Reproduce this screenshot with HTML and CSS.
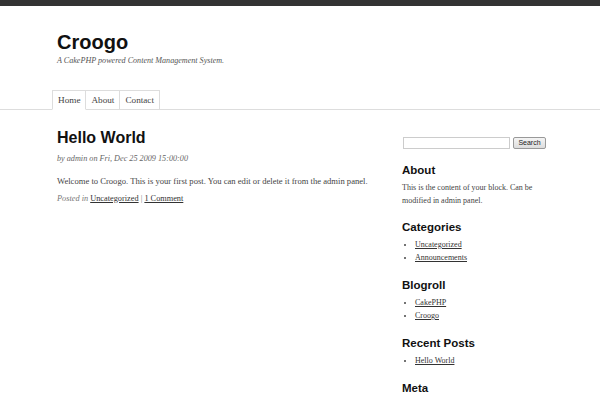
FILE: index.html
```html
<!DOCTYPE html>
<html>
<head>
<meta charset="utf-8">
<link rel="stylesheet" href="styles.css">
</head>
<body>
<div class="topbar"></div>
<header class="header">
  <div class="wrap">
    <h1 class="site-title">Croogo</h1>
    <p class="tagline">A CakePHP powered Content Management System.</p>
    <ul class="nav">
      <li class="active"><a href="#">Home</a></li>
      <li><a href="#">About</a></li>
      <li><a href="#">Contact</a></li>
    </ul>
  </div>
</header>
<div class="wrap main">
  <div class="content">
    <h2 class="post-title">Hello World</h2>
    <p class="meta">by admin on Fri, Dec 25 2009 15:00:00</p>
    <p class="body">Welcome to Croogo. This is your first post. You can edit or delete it from the admin panel.</p>
    <p class="foot"><em>Posted in</em> <a href="#">Uncategorized</a> | <a href="#">1 Comment</a></p>
  </div>
  <aside class="sidebar">
    <form class="search"><input type="text" class="search-input"><button type="button" class="search-btn">Search</button></form>
    <div class="block">
      <h3>About</h3>
      <p>This is the content of your block. Can be modified in admin panel.</p>
    </div>
    <div class="block">
      <h3>Categories</h3>
      <ul><li><a href="#">Uncategorized</a></li><li><a href="#">Announcements</a></li></ul>
    </div>
    <div class="block">
      <h3>Blogroll</h3>
      <ul><li><a href="#">CakePHP</a></li><li><a href="#">Croogo</a></li></ul>
    </div>
    <div class="block">
      <h3>Recent Posts</h3>
      <ul><li><a href="#">Hello World</a></li></ul>
    </div>
    <div class="block">
      <h3>Meta</h3>
    </div>
  </aside>
</div>
</body>
</html>
```
FILE: styles.css
```css
html, body { margin: 0; padding: 0; background: #fff; }
body { font-family: "Liberation Serif", "Times New Roman", serif; font-size: 9px; color: #444; overflow: hidden; height: 400px; }
.topbar { height: 6px; background: #333; }
.wrap { margin-left: 52px; width: 500px; }
.header { border-bottom: 1px solid #ddd; }
.site-title { margin: 0 0 0 5px; padding-top: 24px; font-family: "Liberation Sans", Arial, sans-serif; font-size: 20px; font-weight: bold; color: #111; line-height: 24px; }
.tagline { margin: 2px 0 0 5px; font-style: italic; font-size: 8.1px; color: #555; line-height: 10px; }
.nav { list-style: none; margin: 24px 0 -1px 0; padding: 0; display: flex; }
.nav li { border: 1px solid #ddd; border-left: none; border-bottom: 1px solid #ddd; background: #fff; }
.nav li:first-child { border-left: 1px solid #ddd; }
.nav li.active { border-bottom-color: #fff; }
.nav a { display: block; padding: 0 5px; line-height: 18px; font-size: 9.2px; color: #444; text-decoration: none; }
.main { display: flex; margin-left: 57px; width: 490px; }
.content { width: 345px; }
.post-title { margin: 19px 0 0; font-family: "Liberation Sans", Arial, sans-serif; font-size: 16px; font-weight: bold; color: #111; line-height: 18px; }
.meta { margin: 7px 0 0; font-style: italic; font-size: 8.2px; color: #666; line-height: 10px; }
.body { margin: 12px 0 0; font-size: 8.6px; line-height: 10px; color: #444; }
.foot { margin: 7.5px 0 0; font-size: 8.3px; line-height: 10px; color: #777; }
.foot em { color: #777; }
.foot a { color: #333; }
.sidebar { width: 145px; margin-left: 0; padding-top: 27px; }
.search { display: flex; align-items: center; gap: 3px; margin: 0 0 1px 1px; }
.search-input { width: 105px; height: 10px; border: 1px solid #ccc; padding: 0; margin: 0; box-sizing: content-box; }
.search-btn { height: 12px; width: 33px; padding: 0; margin: 0; font-family: "Liberation Sans", Arial, sans-serif; font-size: 7px; border: 1px solid #999; border-radius: 2px; background: linear-gradient(#f4f4f4, #ddd); color: #222; line-height: 10px; }
.block h3 { margin: 13.5px 0 0; font-family: "Liberation Sans", Arial, sans-serif; font-size: 11.5px; font-weight: bold; color: #111; line-height: 14px; }
.block p { margin: 4px 0 0; font-size: 8px; line-height: 13px; color: #444; }
.block ul { margin: 3.5px 0 0; padding-left: 13px; font-size: 8px; line-height: 13.5px; }
.block li { list-style: disc; }
.block a { color: #333; }
```
